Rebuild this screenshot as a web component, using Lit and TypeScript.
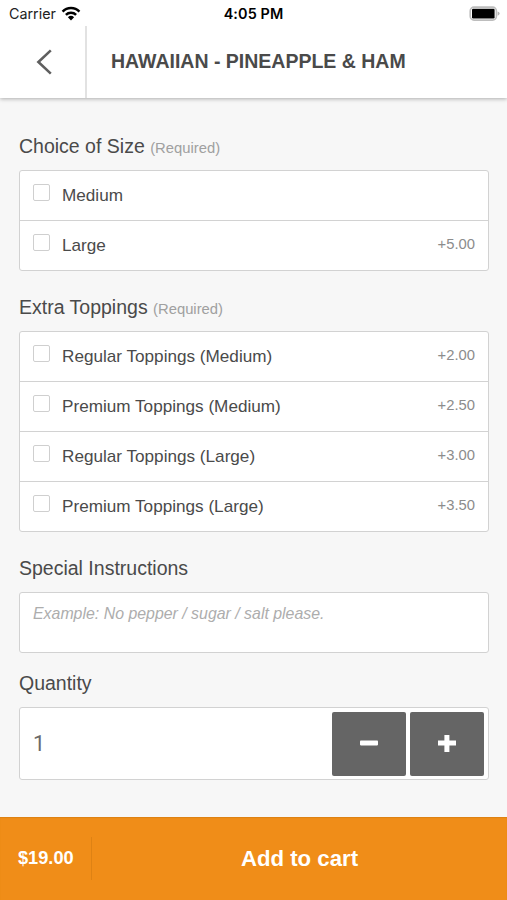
import { LitElement, html, css, nothing } from "lit";
import { customElement, property, state } from "lit/decorators.js";

interface Choice {
  label: string;
  price?: string;
}

@customElement("status-bar")
class StatusBar extends LitElement {
  static styles = css`
    :host {
      display: grid;
      grid-template-columns: 1fr auto 1fr;
      align-items: center;
      height: 26px;
      box-sizing: border-box;
      padding: 1px 7px 0 9px;
      font-family: Inter, "Liberation Sans", sans-serif;
      font-size: 14.3px;
      line-height: 26px;
      color: #222;
      background: #fff;
    }
    .carrier {
      display: flex;
      align-items: center;
      gap: 5px;
    }
    .time {
      margin-right: 2px;
      font-weight: 600;
      font-size: 14.4px;
      letter-spacing: 0.1px;
      color: #000;
    }
    .battery {
      justify-self: end;
    }
    svg {
      display: block;
    }
  `;

  render() {
    return html`
      <div class="carrier">
        <span>Carrier</span>
        <svg width="20" height="16" viewBox="0 0 20 16">
          <g fill="none" stroke="#000" stroke-width="2.5">
            <path d="M1.6 5.6A11.6 11.6 0 0 1 18.4 5.6" />
            <path d="M4.9 8.9A7.2 7.2 0 0 1 15.1 8.9" />
          </g>
          <path d="M10 14.4L6.9 11.2A4.5 4.5 0 0 1 13.1 11.2Z" fill="#000" />
        </svg>
      </div>
      <div class="time">4:05 PM</div>
      <svg class="battery" width="31" height="16" viewBox="0 0 31 16">
        <rect x="1.2" y="1.1" width="26.2" height="13" rx="3.8" fill="#fff" stroke="#bdbdbd" stroke-width="1.6" />
        <rect x="3" y="2.8" width="22.6" height="9.6" rx="1.2" fill="#000" />
        <path d="M28.6 5.4Q30.6 6 30.6 7.6T28.6 9.8Z" fill="#b4b4b4" />
      </svg>
    `;
  }
}

@customElement("option-list")
class OptionList extends LitElement {
  static styles = css`
    :host {
      display: block;
    }
    .box {
      background: #fff;
      border: 1px solid #d2d2d2;
      border-radius: 3px;
    }
    .row {
      display: flex;
      align-items: flex-start;
      height: 50px;
      box-sizing: border-box;
      padding: 0 13px;
      border-bottom: 1px solid #d2d2d2;
    }
    .row:last-child {
      height: 49px;
      border-bottom: 0;
    }
    .check {
      flex: none;
      width: 17px;
      height: 17px;
      box-sizing: border-box;
      margin-top: 13px;
      border: 1px solid #cfcfcf;
      border-radius: 2px;
    }
    .label {
      flex: 1;
      margin-left: 12px;
      font-size: 17.15px;
      line-height: 48px;
      color: #4a4a4a;
    }
    .price {
      font-size: 14.8px;
      line-height: 46px;
      color: #8c8c8c;
    }
  `;

  @property({ attribute: false }) choices: Choice[] = [];

  render() {
    return html`
      <div class="box">
        ${this.choices.map(
          (c) => html`
            <div class="row">
              <span class="check"></span>
              <span class="label">${c.label}</span>
              ${c.price ? html`<span class="price">${c.price}</span>` : nothing}
            </div>
          `
        )}
      </div>
    `;
  }
}

@customElement("app-root")
class AppRoot extends LitElement {
  static styles = css`
    :host {
      display: flex;
      flex-direction: column;
      height: 900px;
      overflow: hidden;
      background: #f7f7f7;
      font-family: "Liberation Sans", Arial, sans-serif;
      color: #4a4a4a;
    }
    .top {
      flex: none;
      height: 98px;
      background: #fff;
      box-shadow: 0 1px 4px rgba(0, 0, 0, 0.3);
    }
    .nav {
      display: flex;
      height: 72px;
    }
    .back {
      display: flex;
      align-items: center;
      justify-content: center;
      width: 87px;
      box-sizing: border-box;
      padding-left: 2px;
      border-right: 2px solid #e2e2e2;
    }
    .title {
      margin: 0 0 0 24px;
      font-size: 19.5px;
      font-weight: bold;
      line-height: 71px;
      white-space: nowrap;
    }
    .content {
      flex: 1;
      display: flex;
      flex-direction: column;
      padding: 33px 18px 0 19px;
    }
    .heading {
      flex: none;
      margin: 0;
      height: 39px;
      font-size: 19.5px;
      font-weight: normal;
      line-height: 30px;
    }
    .heading small {
      font-size: 14.8px;
      color: #a0a0a0;
    }
    option-list {
      flex: none;
    }
    .sizes,
    .toppings {
      margin-bottom: 21px;
    }
    .field {
      flex: none;
      box-sizing: border-box;
      background: #fff;
      border: 1px solid #d2d2d2;
      border-radius: 3px;
    }
    .note {
      height: 61px;
      margin-bottom: 15px;
      padding: 0 13px;
      font-size: 15.9px;
      font-style: italic;
      line-height: 42px;
      color: #adadad;
    }
    .qty {
      display: flex;
      gap: 4px;
      height: 73px;
      padding: 4px 4px 3px 13px;
    }
    .count {
      flex: 1;
      font-family: Roboto, "Liberation Sans", sans-serif;
      font-size: 21.5px;
      line-height: 63px;
      color: #6a6a6a;
    }
    .step {
      display: grid;
      place-items: center;
      width: 74px;
      height: 64px;
      padding: 0;
      border: 0;
      border-radius: 2px;
      background: #656565;
    }
    svg {
      display: block;
    }
    .cart {
      flex: none;
      display: flex;
      align-items: center;
      height: 83px;
      color: #fff;
      font-weight: bold;
      background: #f08d18;
      box-shadow: inset 0 1px 1px #dc8113;
    }
    .total {
      width: 92px;
      height: 43px;
      box-sizing: border-box;
      padding-left: 18px;
      border-right: 1px solid #de8214;
      font-size: 18.2px;
      line-height: 42px;
    }
    .add {
      flex: 1;
      text-align: center;
      font-size: 22.2px;
      line-height: 43px;
    }
  `;

  @state() private quantity = 1;

  private sizes: Choice[] = [{ label: "Medium" }, { label: "Large", price: "+5.00" }];

  private toppings: Choice[] = [
    { label: "Regular Toppings (Medium)", price: "+2.00" },
    { label: "Premium Toppings (Medium)", price: "+2.50" },
    { label: "Regular Toppings (Large)", price: "+3.00" },
    { label: "Premium Toppings (Large)", price: "+3.50" },
  ];

  private step(delta: number) {
    this.quantity = Math.max(1, this.quantity + delta);
  }

  render() {
    return html`
      <header class="top">
        <status-bar></status-bar>
        <div class="nav">
          <div class="back">
            <svg width="18" height="28" viewBox="0 0 18 28">
              <path d="M15.8 2.4L3.4 14L15.8 25.6" fill="none" stroke="#5f5f5f" stroke-width="2.6" />
            </svg>
          </div>
          <h1 class="title">HAWAIIAN - PINEAPPLE &amp; HAM</h1>
        </div>
      </header>
      <main class="content">
        <h2 class="heading">Choice of Size <small>(Required)</small></h2>
        <option-list class="sizes" .choices=${this.sizes}></option-list>
        <h2 class="heading">Extra Toppings <small>(Required)</small></h2>
        <option-list class="toppings" .choices=${this.toppings}></option-list>
        <h2 class="heading">Special Instructions</h2>
        <div class="field note">Example: No pepper / sugar / salt please.</div>
        <h2 class="heading">Quantity</h2>
        <div class="field qty">
          <span class="count">${this.quantity}</span>
          <button class="step" aria-label="Decrease" @click=${() => this.step(-1)}>
            <svg width="18" height="18" viewBox="0 0 18 18">
              <rect x="0" y="5.4" width="18" height="5" rx="0.8" fill="#fff" />
            </svg>
          </button>
          <button class="step" aria-label="Increase" @click=${() => this.step(1)}>
            <svg width="18" height="18" viewBox="0 0 18 18">
              <path d="M6.4 0H11.4V5.6H18V10.4H11.4V17H6.4V10.4H0V5.6H6.4Z" fill="#fff" />
            </svg>
          </button>
        </div>
      </main>
      <footer class="cart">
        <div class="total">$19.00</div>
        <div class="add">Add to cart</div>
      </footer>
    `;
  }
}
